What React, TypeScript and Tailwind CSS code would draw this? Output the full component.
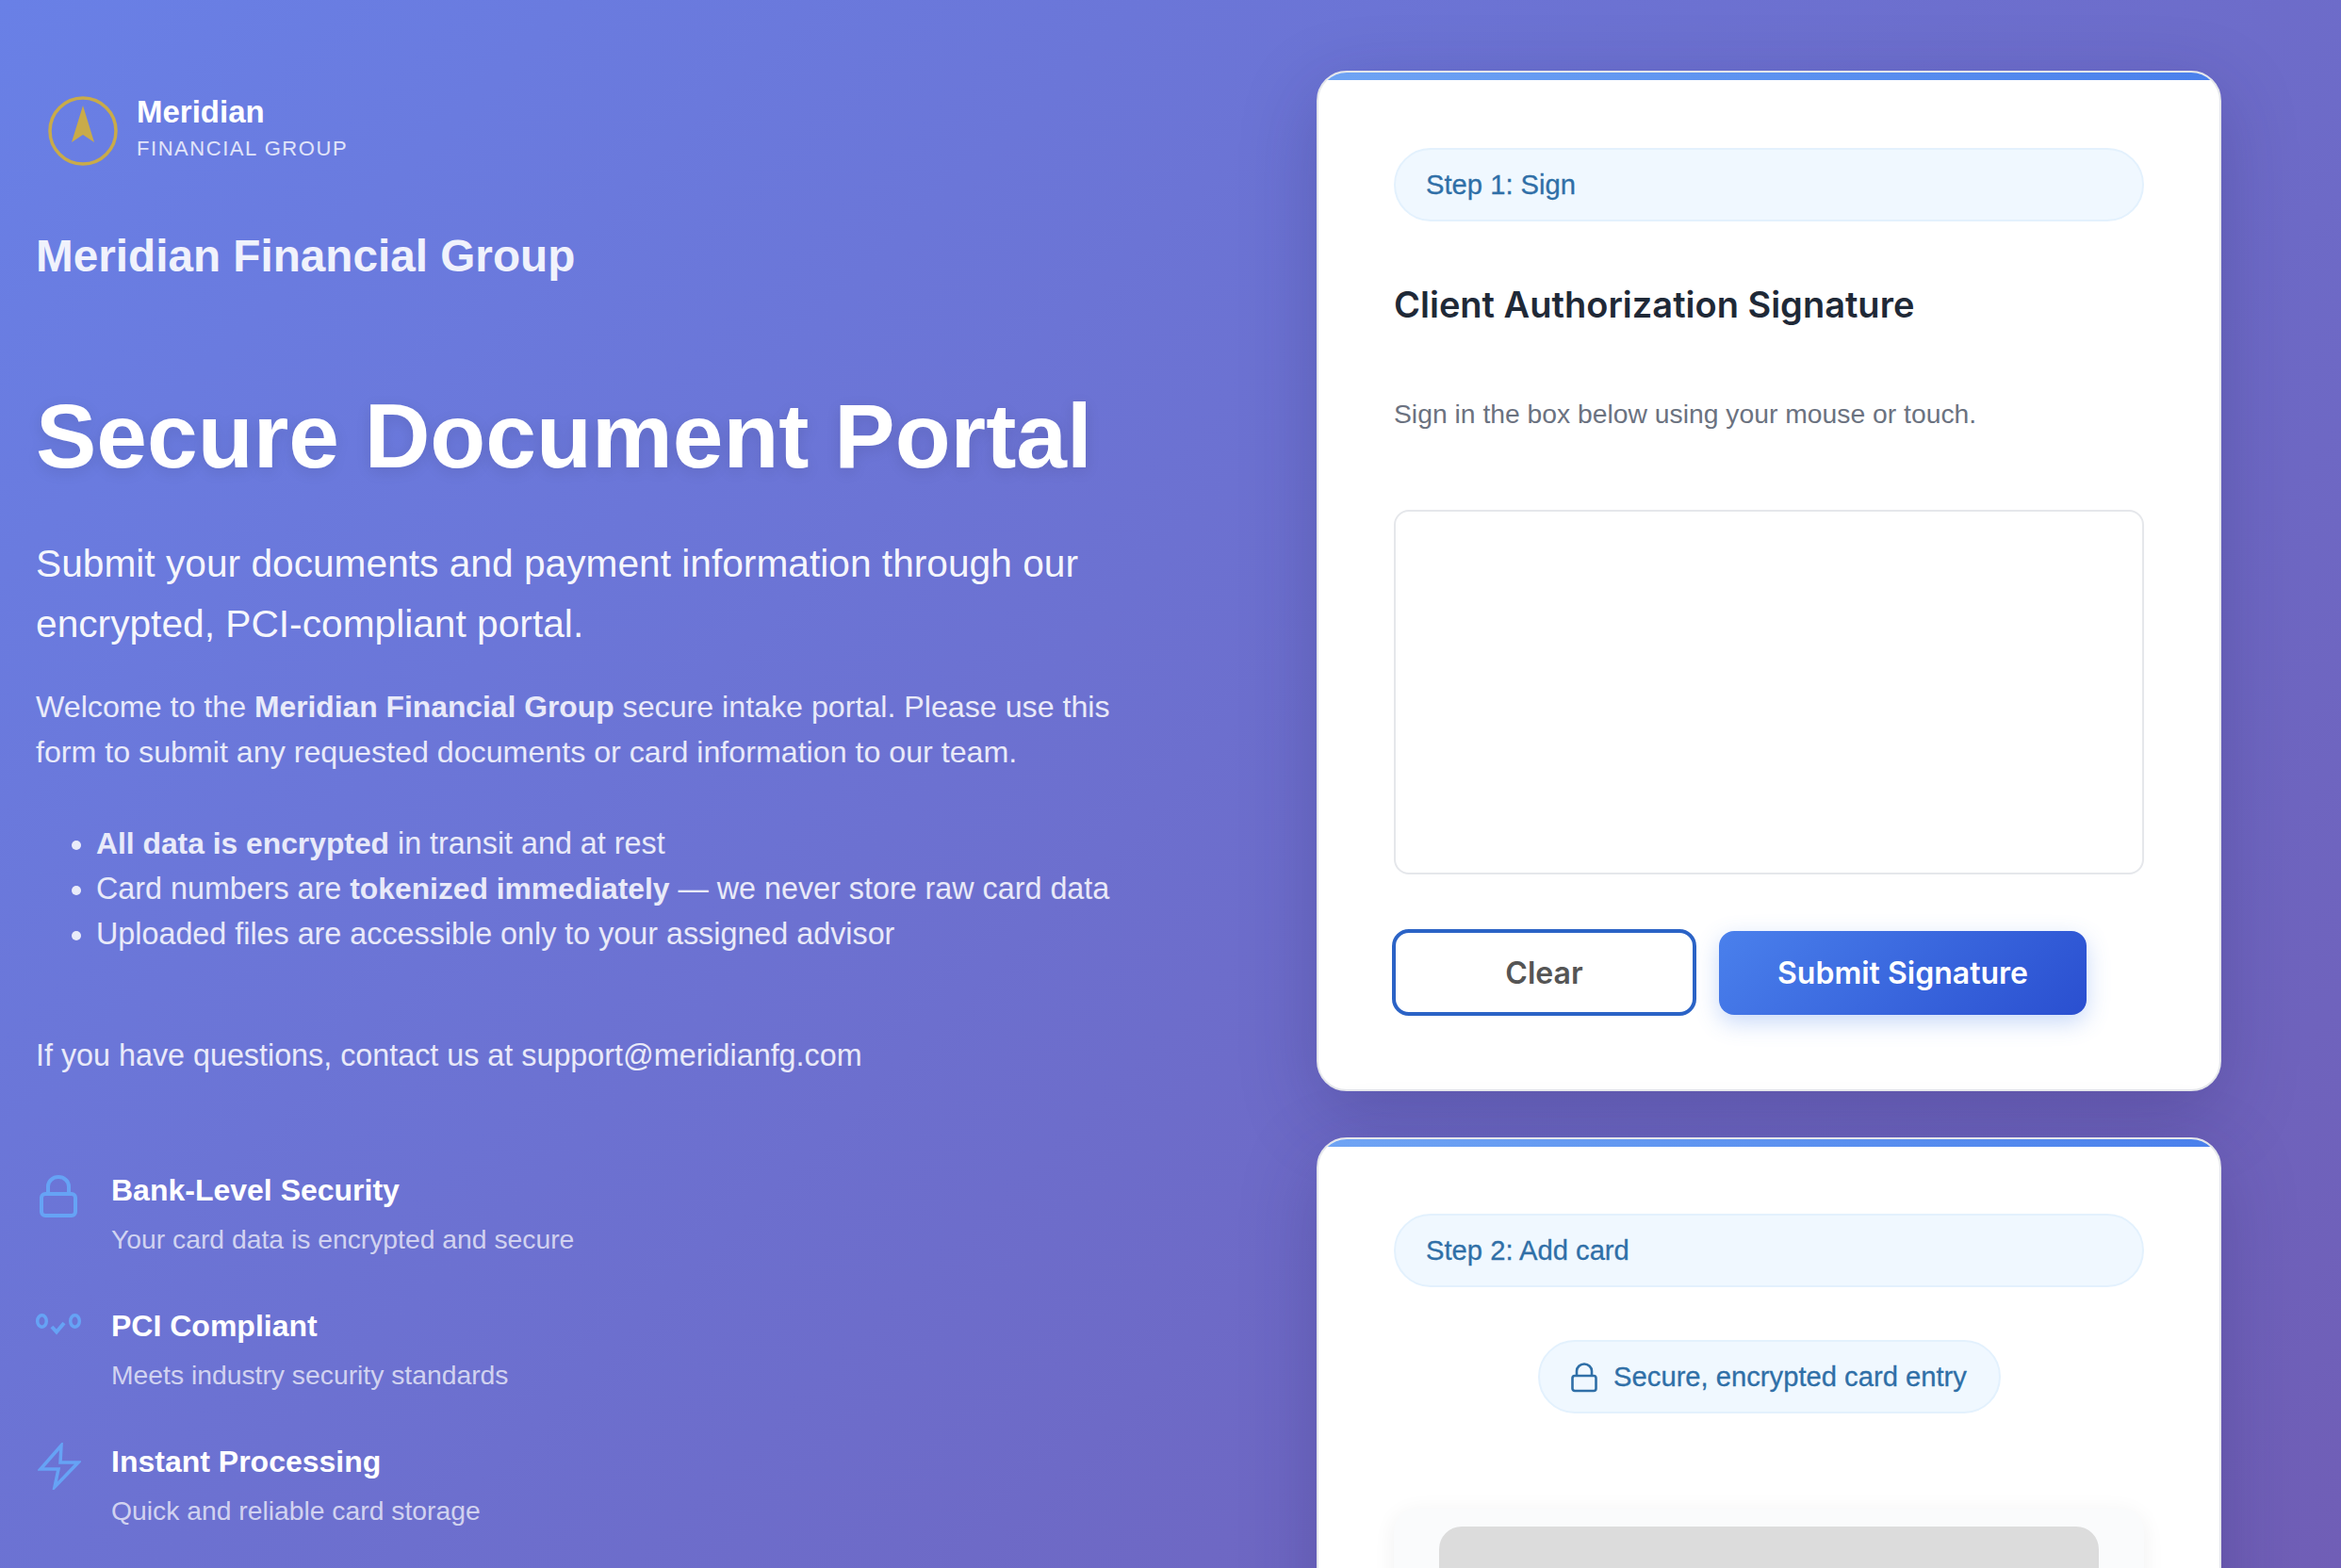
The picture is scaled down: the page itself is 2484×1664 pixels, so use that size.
import React from "react";

const helv = "font-['Liberation_Sans',Arial,sans-serif]";

function Feature({ icon, title, desc, className }: { icon: React.ReactNode; title: string; desc: string; className?: string }) {
  return (
    <div className={"flex h-[144px] " + (className ?? "")}>
      <div className="w-[80px] shrink-0">{icon}</div>
      <div>
        <div className="text-[32px] leading-[40px] font-bold text-white">{title}</div>
        <div className="mt-[13px] text-[28.3px] leading-[38px] text-white/70">{desc}</div>
      </div>
    </div>
  );
}

function Pill({ children, className }: { children: React.ReactNode; className?: string }) {
  return (
    <div className={"flex h-[78px] items-center rounded-full border-2 border-[#e3f1fd] bg-[#f0f8ff] pt-[2px] text-[29.2px] text-[#2f6fa7] [-webkit-text-stroke:0.3px_#2f6fa7] " + (className ?? "")}>
      {children}
    </div>
  );
}

export default function App() {
  return (
    <div className={"relative flex h-[1664px] w-[2484px] overflow-hidden bg-[linear-gradient(135deg,#6980e6_0%,#705eb6_100%)] " + helv}>
      <section className="w-[1397px] shrink-0 pl-[38px] pt-[102px]">
        <div className="ml-[13px] flex h-[74px] items-center">
          <svg width="74" height="74" viewBox="0 0 74 74" fill="none">
            <circle cx="37" cy="37" r="35" stroke="#c9ab49" strokeWidth="3.5" />
            <path d="M37 10 L49 49 L37 41 L25 49 Z" fill="#c9ab49" />
          </svg>
          <div className="mb-[6px] ml-[20px]">
            <div className="text-[33px] leading-[40px] font-bold text-white">Meridian</div>
            <div className="mt-[4px] text-[22px] leading-[30px] tracking-[1.55px] text-white/80">FINANCIAL GROUP</div>
          </div>
        </div>
        <div className="mt-[66px] text-[47.7px] leading-[60px] font-bold text-white/90">Meridian Financial Group</div>
        <h1 className="mt-[105px] text-[96.5px] leading-[112px] font-bold text-white [text-shadow:0_4px_16px_rgba(0,0,0,0.1)]">Secure Document Portal</h1>
        <p className="mt-[47px] w-[1160px] text-[40.7px] leading-[64px] text-white/95">
          Submit your documents and payment information through our encrypted, PCI-compliant portal.
        </p>
        <p className="mt-[32px] w-[1160px] text-[32.2px] leading-[48px] text-white/85">
          Welcome to the <b className="text-[31.8px]">Meridian Financial Group</b> secure intake portal. Please use this form to submit any requested documents or card information to our team.
        </p>
        <ul className="mt-[49px] list-disc pl-[64px] text-[32.3px] leading-[48px] text-white/85">
          <li><b className="text-[31.8px]">All data is encrypted</b> in transit and at rest</li>
          <li>Card numbers are <b className="text-[31.8px]">tokenized immediately</b> — we never store raw card data</li>
          <li>Uploaded files are accessible only to your assigned advisor</li>
        </ul>
        <p className="mt-[81px] text-[32.3px] leading-[48px] text-white/85">If you have questions, contact us at support@meridianfg.com</p>
        <div className="mt-[99px]">
          <Feature
            title="Bank-Level Security"
            desc="Your card data is encrypted and secure"
            icon={
              <svg width="44" height="46" viewBox="0 0 44 46" fill="none" stroke="#66a3f5" strokeWidth="4" className="ml-[2px] mt-[4px]">
                <rect x="4" y="20" width="36" height="23" rx="4" />
                <path d="M11 20 V12 a11 10 0 0 1 22 0 V20" />
              </svg>
            }
          />
          <Feature
            title="PCI Compliant"
            desc="Meets industry security standards"
            icon={
              <svg width="50" height="24" viewBox="0 0 50 24" fill="none" stroke="#66a3f5" strokeWidth="3.5" className="mt-[7px]">
                <ellipse cx="6.5" cy="8" rx="4.8" ry="6.2" />
                <ellipse cx="41.5" cy="8" rx="4.8" ry="6.2" />
                <path d="M17 14 L22 19.5 L30 10" strokeWidth="4" />
              </svg>
            }
          />
          <Feature
            title="Instant Processing"
            desc="Quick and reliable card storage"
            icon={
              <svg width="46" height="50" viewBox="0 0 46 50" fill="none" stroke="#66a3f5" strokeWidth="3.5" strokeLinejoin="miter" className="ml-[2px]">
                <path d="M25 3 L3 28 H22 L18 47 L43 21 H24 Z" />
              </svg>
            }
          />
        </div>
      </section>

      <section className="w-[960px] shrink-0 pt-[75px]">
        <div className="h-[1083px] overflow-hidden rounded-[32px] border-2 border-[#e5e7eb] bg-white shadow-[0_24px_80px_rgba(40,30,90,0.25)]">
          <div className="h-[8px] bg-[linear-gradient(90deg,#6fa4f4,#4a80ec)]" />
          <div className="px-[80px] pt-[72px]">
            <Pill className="pl-[32px]">Step 1: Sign</Pill>
            <h2 className="mt-[58px] font-['Inter',sans-serif] text-[38px] leading-[60px] font-semibold text-[#1f2937]">Client Authorization Signature</h2>
            <p className="mt-[64px] text-[28.3px] leading-[44px] text-[#6b7280]">Sign in the box below using your mouse or touch.</p>
            <div className="mt-[80px] h-[387px] rounded-[16px] border-2 border-[#e5e7eb] bg-white" />
            <div className="mt-[58px] flex items-center gap-[24px]">
              <button className="ml-[-2px] h-[92px] w-[323px] rounded-[18px] border-[4px] border-[#2b63c6] bg-white pt-[2px] font-['Inter',sans-serif] text-[32px] font-semibold text-[#555555]">Clear</button>
              <button className="h-[89px] w-[390px] rounded-[16px] bg-[linear-gradient(135deg,#4a80ec,#2a4fd0)] pt-[2px] font-['Inter',sans-serif] text-[32px] font-semibold text-white shadow-[0_8px_24px_rgba(74,128,236,0.3)]">Submit Signature</button>
            </div>
          </div>
        </div>
        <div className="mt-[49px] h-[700px] overflow-hidden rounded-[32px] border-2 border-[#e5e7eb] bg-white shadow-[0_24px_80px_rgba(40,30,90,0.25)]">
          <div className="h-[8px] bg-[linear-gradient(90deg,#6fa4f4,#4a80ec)]" />
          <div className="px-[80px] pt-[71px]">
            <Pill className="pl-[32px]">Step 2: Add card</Pill>
            <div className="mt-[56px] flex justify-center">
              <Pill className="w-[491px] justify-center gap-[17px]">
                <svg width="28" height="32" viewBox="0 0 28 32" fill="none" stroke="#2f6fa7" strokeWidth="2.6">
                  <rect x="1.5" y="14" width="25" height="16" rx="2.5" />
                  <path d="M6 14 V9 a8 7.5 0 0 1 16 0 V14" />
                </svg>
                Secure, encrypted card entry
              </Pill>
            </div>
            <div className="mt-[101px] h-[300px] rounded-[24px] bg-[#fafbfc] px-[48px] pt-[19px] shadow-[0_4px_24px_rgba(0,0,0,0.06)]">
              <div className="h-[240px] rounded-[24px] bg-[#dcdcdc]" />
            </div>
          </div>
        </div>
      </section>
    </div>
  );
}
